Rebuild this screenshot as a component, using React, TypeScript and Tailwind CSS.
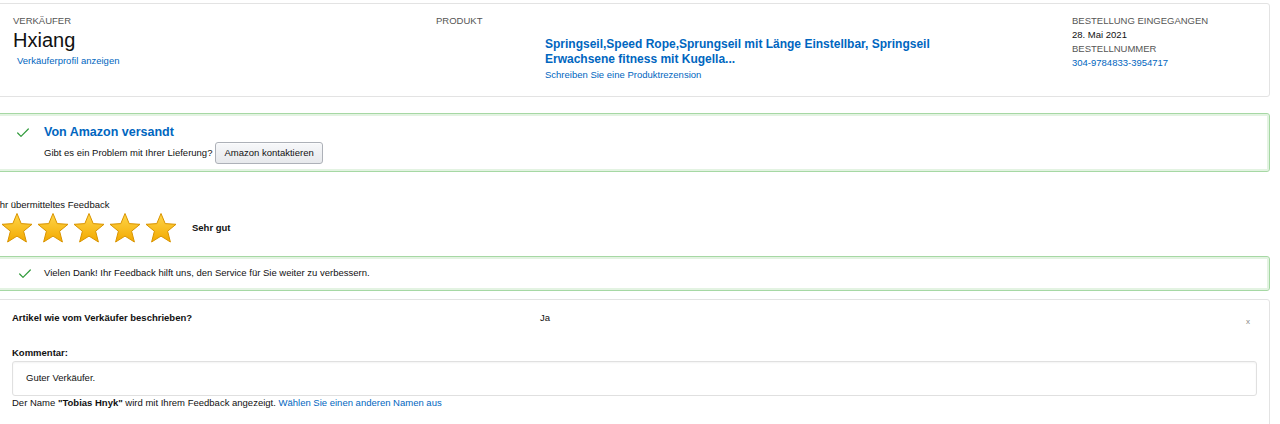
import { Check } from "lucide-react";

const font = { fontFamily: '"Liberation Sans", Arial, sans-serif' };

function Star() {
  return (
    <svg width="34" height="32" viewBox="0 0 34 32">
      <defs>
        <linearGradient id="starfill" x1="0" y1="0" x2="0" y2="1">
          <stop offset="0%" stopColor="#ffd64a" />
          <stop offset="100%" stopColor="#f2a900" />
        </linearGradient>
      </defs>
      <path
        d="M17 1.5 L21.2 11.6 L32 12.3 L23.6 19.2 L26.4 30 L17 24.1 L7.6 30 L10.4 19.2 L2 12.3 L12.8 11.6 Z"
        fill="url(#starfill)"
        stroke="#d99400"
        strokeWidth="1"
        strokeLinejoin="round"
      />
    </svg>
  );
}

function GreenBox({ children, className }: { children: React.ReactNode; className?: string }) {
  return (
    <div
      className={
        "rounded-[3px] border border-[#a6d8a4] shadow-[0_0_0_2px_#e3f3e2_inset] " + (className ?? "")
      }
    >
      {children}
    </div>
  );
}

export default function App() {
  return (
    <div className="h-[424px] w-[1280px] overflow-hidden bg-white text-[#111]" style={font}>
      <div className="-ml-[3px] w-[1273px] pt-[3px]">
        {/* order header */}
        <div className="flex h-[94px] rounded-[3px] border border-[#e3e3e3] pl-[15px] pt-[10px]">
          <div className="w-[423px]">
            <div className="text-[9.5px] leading-[13px] text-[#555]">VERKÄUFER</div>
            <div className="mt-[2px] text-[20px] leading-[22px] text-[#111]">Hxiang</div>
            <div className="mt-[3px] pl-[4px] text-[9.5px] leading-[13px] text-[#0066c0]">
              Verkäuferprofil anzeigen
            </div>
          </div>
          <div className="w-[636px]">
            <div className="text-[9.5px] leading-[13px] text-[#555]">PRODUKT</div>
            <div className="mt-[10px] pl-[109px]">
              <div className="w-[420px] text-[12px] font-bold leading-[15px] text-[#0066c0]">
                Springseil,Speed Rope,Sprungseil mit Länge Einstellbar, Springseil Erwachsene fitness mit Kugella...
              </div>
              <div className="mt-[1px] text-[9.5px] leading-[13px] text-[#0066c0]">
                Schreiben Sie eine Produktrezension
              </div>
            </div>
          </div>
          <div className="text-[9.5px] leading-[14px]">
            <div className="text-[#555]">BESTELLUNG EINGEGANGEN</div>
            <div className="text-[#111]">28. Mai 2021</div>
            <div className="text-[#555]">BESTELLNUMMER</div>
            <div className="text-[#0066c0]">304-9784833-3954717</div>
          </div>
        </div>

        {/* shipped by amazon */}
        <GreenBox className="mt-[16px] h-[59px]">
          <div className="flex pl-[17px] pt-[10px]">
            <Check size={16} strokeWidth={1.8} className="mt-[1px] text-[#2f9a3a]" />
            <div className="ml-[13px]">
              <div className="text-[12.5px] font-bold leading-[16px] text-[#0066c0]">Von Amazon versandt</div>
              <div className="mt-[2px] flex items-center text-[9.5px]">
                <span>Gibt es ein Problem mit Ihrer Lieferung?</span>
                <button className="ml-[3px] h-[22px] rounded-[3px] border border-[#adb1b8] bg-gradient-to-b from-[#f7f8fa] to-[#e7e9ec] px-[8px] text-[9.5px] text-[#111] shadow-[0_1px_0_rgba(255,255,255,0.6)_inset]">
                  Amazon kontaktieren
                </button>
              </div>
            </div>
          </div>
        </GreenBox>

        {/* feedback stars */}
        <div className="mt-[26px] text-[9.5px] leading-[13px]">Ihr übermitteltes Feedback</div>
        <div className="mt-[1px] flex items-center pl-[3px]">
          <div className="flex gap-[2px]">
            <Star />
            <Star />
            <Star />
            <Star />
            <Star />
          </div>
          <div className="ml-[14px] text-[9.5px] font-bold">Sehr gut</div>
        </div>

        <GreenBox className="mt-[12px] flex h-[35px] items-center pl-[19px]">
          <Check size={16} strokeWidth={1.8} className="text-[#2f9a3a]" />
          <span className="ml-[11px] text-[9.5px]">
            Vielen Dank! Ihr Feedback hilft uns, den Service für Sie weiter zu verbessern.
          </span>
        </GreenBox>

        {/* comment card */}
        <div className="mt-[8px] h-[140px] rounded-[3px] border border-[#e3e3e3] pl-[14px] pr-[12px]">
          <div className="flex pt-[11px] text-[9.5px]">
            <span className="w-[528px] font-bold">Artikel wie vom Verkäufer beschrieben?</span>
            <span className="flex-1">Ja</span>
            <span className="mt-[5px] pr-[7px] text-[8px] text-[#888]">x</span>
          </div>
          <div className="mt-[18px] text-[9.5px] font-bold leading-[13px]">Kommentar:</div>
          <div className="mt-[2px] flex h-[35px] items-center rounded-[3px] border border-[#e0e0e0] pl-[13px] text-[9.5px] shadow-[0_1px_2px_rgba(0,0,0,0.05)_inset]">
            Guter Verkäufer.
          </div>
          <div className="text-[9.5px] leading-[13px]">
            Der Name <b>"Tobias Hnyk"</b> wird mit Ihrem Feedback angezeigt.{" "}
            <span className="text-[#0066c0]">Wählen Sie einen anderen Namen aus</span>
          </div>
        </div>
      </div>
    </div>
  );
}
